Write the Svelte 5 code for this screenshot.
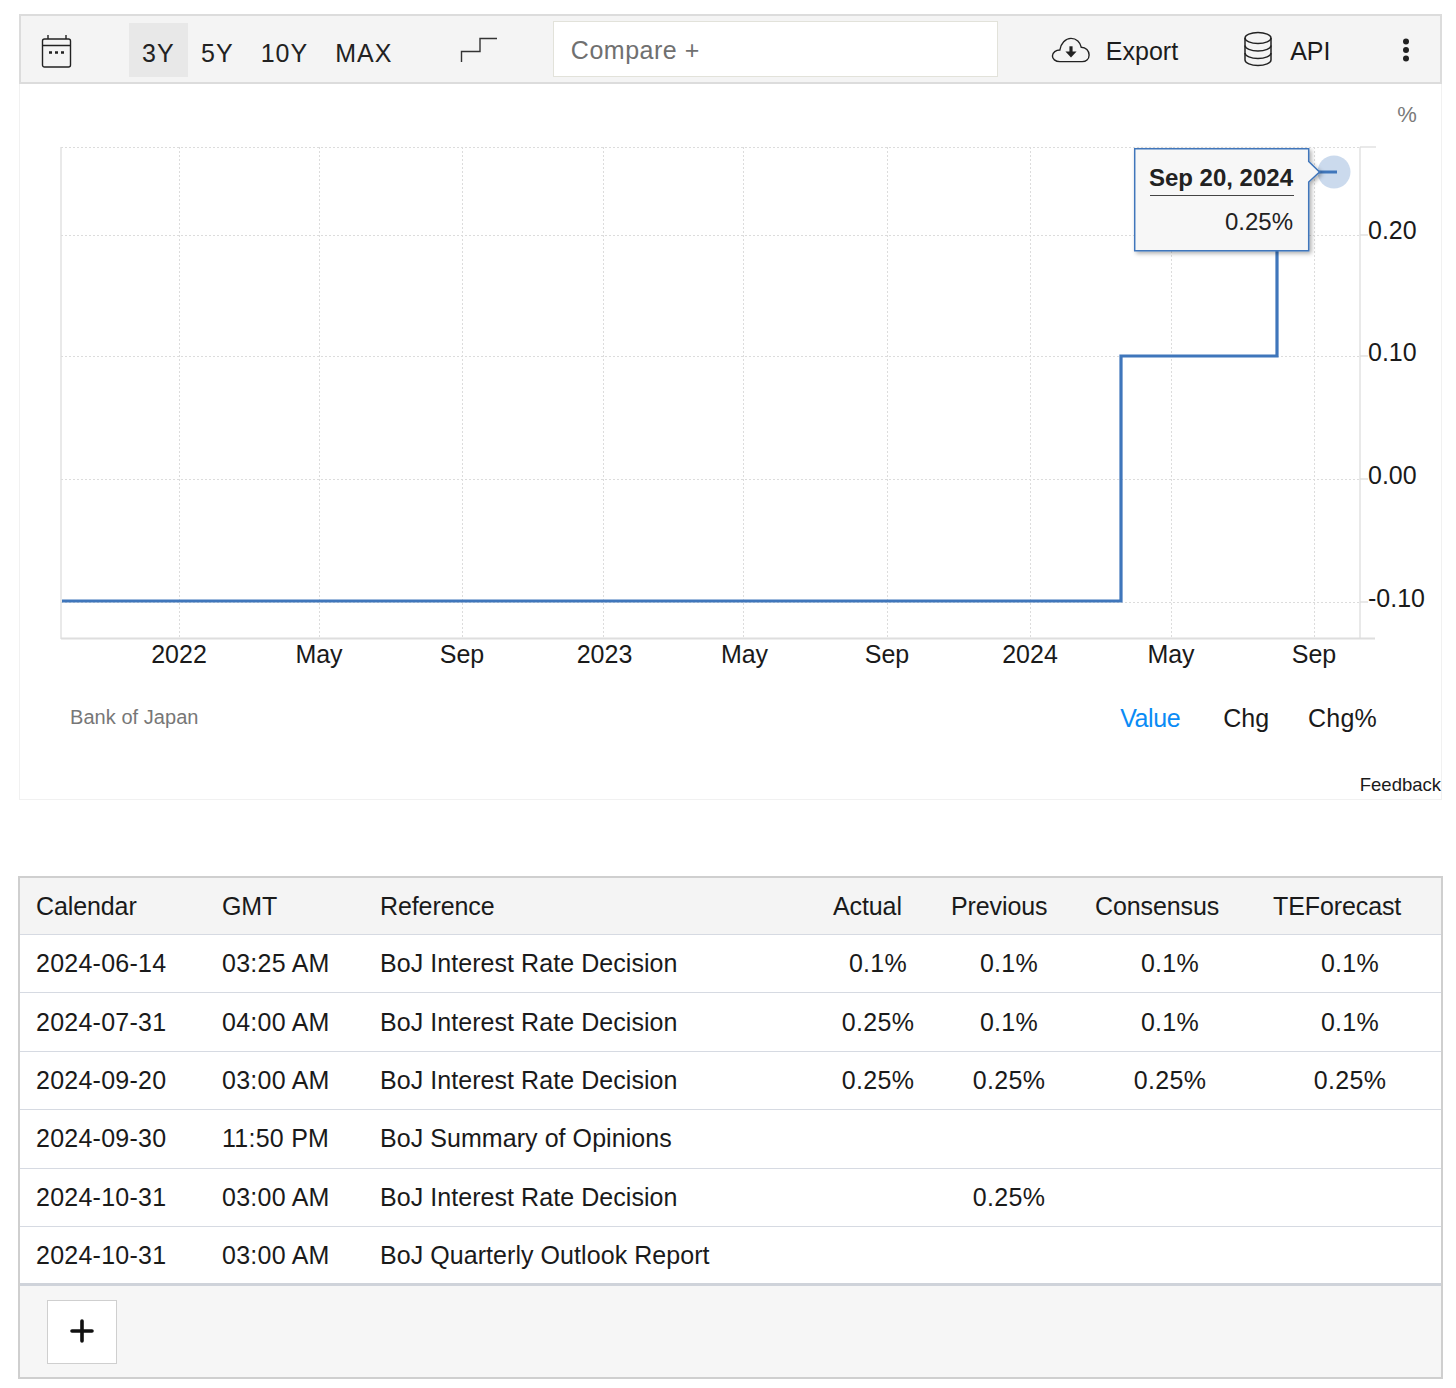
<script>
  const vx = [179, 319, 462, 603, 743, 887, 1030, 1171, 1314];
  const hy = [147, 235, 356, 479, 602];
  const xl = [[179,'2022'],[319,'May'],[462,'Sep'],[604.5,'2023'],[744.5,'May'],[887,'Sep'],[1030,'2024'],[1171,'May'],[1314,'Sep']];
  const yl = [[239,'0.20'],[361,'0.10'],[484,'0.00'],[607,'-0.10']];
  const rows = [
    ['2024-06-14','03:25 AM','BoJ Interest Rate Decision','0.1%','0.1%','0.1%','0.1%'],
    ['2024-07-31','04:00 AM','BoJ Interest Rate Decision','0.25%','0.1%','0.1%','0.1%'],
    ['2024-09-20','03:00 AM','BoJ Interest Rate Decision','0.25%','0.25%','0.25%','0.25%'],
    ['2024-09-30','11:50 PM','BoJ Summary of Opinions','','','',''],
    ['2024-10-31','03:00 AM','BoJ Interest Rate Decision','','0.25%','',''],
    ['2024-10-31','03:00 AM','BoJ Quarterly Outlook Report','','','','']
  ];
  const heads = ['Calendar','GMT','Reference','Actual','Previous','Consensus','TEForecast'];
</script>

<div class="page">
  <section class="card">
    <div class="toolbar">
      <svg class="cal" width="32" height="36" viewBox="0 0 32 36" fill="none" stroke="#222" stroke-width="1.4">
        <rect x="1.5" y="6" width="28" height="28" rx="2"/>
        <path d="M1.5 12.5H29.5M7 2V6M25 2V6"/>
        <path d="M8 19.5h3M14 19.5h3M20 19.5h3" stroke-width="2.4"/>
      </svg>
      <div class="ranges">
        <button class="active">3Y</button><button>5Y</button><button>10Y</button><button>MAX</button>
      </div>
      <svg class="step" width="38" height="26" viewBox="0 0 38 26" fill="none" stroke="#333" stroke-width="1.4">
        <path d="M1.5 25V14.5H20V1.5H37"/>
      </svg>
      <div class="compare">Compare +</div>
      <svg class="cloud" width="40" height="26" viewBox="0 0 42 28" fill="none" stroke="#222" stroke-width="1.5">
        <path d="M9 26.5C4 26.5 1 23.5 1 20.5C1 16.5 5 14 9 14C10 7 15 1.5 21 1.5C27 1.5 31 6 32 11C37 11 40.5 15 40.5 19.5C40.5 24 37 26.5 33 26.5Z"/>
        <path d="M21 10V17" stroke-width="3.4"/>
        <path d="M15 15.5H27L21 22Z" fill="#222" stroke="none"/>
      </svg>
      <span class="tool export">Export</span>
      <svg class="db" width="30" height="36" viewBox="0 0 30 36" fill="none" stroke="#222" stroke-width="1.5">
        <ellipse cx="15" cy="7" rx="13" ry="5.5"/>
        <path d="M2 7V29C2 32 8 34.5 15 34.5C22 34.5 28 32 28 29V7"/>
        <path d="M2 14.5C2 17.5 8 20 15 20C22 20 28 17.5 28 14.5M2 22C2 25 8 27.5 15 27.5C22 27.5 28 25 28 22"/>
      </svg>
      <span class="tool api">API</span>
      <svg class="dots" width="8" height="24" viewBox="0 0 8 24" fill="#222">
        <circle cx="4" cy="3.5" r="3"/><circle cx="4" cy="12" r="3"/><circle cx="4" cy="20.5" r="3"/>
      </svg>
    </div>

    <svg class="chart" width="1422" height="596" viewBox="19 84 1422 596">
      <defs>
        <filter id="sh" x="-10%" y="-10%" width="125%" height="125%">
          <feDropShadow dx="2" dy="2" stdDeviation="2" flood-color="#000" flood-opacity="0.32"/>
        </filter>
      </defs>
      <text x="1407" y="122" class="pct" text-anchor="middle">%</text>
      {#each vx as x}
        <line x1={x + 0.5} x2={x + 0.5} y1="147" y2="639" class="grid"/>
      {/each}
      {#each hy as y}
        <line x1="61" x2="1360" y1={y + 0.5} y2={y + 0.5} class="grid"/>
      {/each}
      <line x1="61" x2="61" y1="147" y2="639" class="axis"/>
      <line x1="1360" x2="1360" y1="147" y2="639" class="axis"/>
      <line x1="61" x2="1375" y1="638.5" y2="638.5" class="axis bottom"/>
      <line x1="1360" x2="1376" y1="147" y2="147" class="axis"/>
      {#each [235,356,479,602] as y}
        <line x1="1360" x2="1368" y1={y} y2={y} class="axis"/>
      {/each}
      <circle cx="1334" cy="172" r="16.5" fill="#cbdaed"/>
      <path d="M62 601H1121V356H1277V172H1337" fill="none" stroke="#3f76bb" stroke-width="3.2"/>
      <path d="M1134.7 148.7H1308.7V161.5L1319.5 172L1308.7 182V250.7H1134.7Z" fill="#f7f7f7" stroke="#3f76bb" stroke-width="1.5" filter="url(#sh)"/>
      <text x="1293" y="186" text-anchor="end" class="tipdate">Sep 20, 2024</text>
      <line x1="1150" x2="1294" y1="195.5" y2="195.5" stroke="#444" stroke-width="1"/>
      <text x="1293" y="230" text-anchor="end" class="tipval">0.25%</text>
      {#each xl as [x, t]}
        <text x={x} y="663" text-anchor="middle" class="lab">{t}</text>
      {/each}
      {#each yl as [y, t]}
        <text x="1368" y={y} class="lab">{t}</text>
      {/each}
    </svg>

    <div class="foot">
      <span class="source">Bank of Japan</span>
      <div class="tabs"><span class="on">Value</span><span class="chg">Chg</span><span class="chgp">Chg%</span></div>
    </div>
    <div class="feedback">Feedback</div>
  </section>

  <section class="tablebox">
    <table>
      <colgroup>
        <col style="width:186px"/><col style="width:158px"/><col style="width:452px"/><col style="width:118px"/><col style="width:144px"/><col style="width:178px"/><col/>
      </colgroup>
      <thead>
        <tr>{#each heads as h, i}<th class:numh={i > 2}>{h}</th>{/each}</tr>
      </thead>
      <tbody>
        {#each rows as r}
          <tr>
            {#each r as c, i}
              <td class:num={i > 2} class:mono={i < 2}>{c}</td>
            {/each}
          </tr>
        {/each}
      </tbody>
    </table>
    <div class="more"><button aria-label="more"><svg width="24" height="24" viewBox="0 0 24 24" stroke="#111" stroke-width="3.6" stroke-linecap="round"><path d="M12 2V22M2 12H22"/></svg></button></div>
  </section>
</div>

<style>
  :global(body) { margin: 0; background: #fff; }
  .page {
    box-sizing: border-box;
    width: 1456px;
    height: 1388px;
    padding: 14px 13px 0 18px;
    font-family: "Liberation Sans", Arial, sans-serif;
    color: #1a1a1a;
  }
  .card {
    box-sizing: border-box;
    margin-left: 1px;
    margin-right: 1px;
    height: 786px;
    border: 1px solid #f1f1f1;
    border-top: 0;
    position: relative;
  }
  .toolbar {
    box-sizing: border-box;
    height: 70px;
    margin-left: -1px;
    margin-right: -1px;
    background: #f4f4f4;
    border: 2px solid #dcdcdc;
    display: flex;
    align-items: center;
  }
  .cal { margin-left: 20px; flex: none; margin-top: 3px; }
  .ranges { display: flex; margin-left: 56px; height: 54px; margin-top: 2px; }
  .ranges button {
    border: 0; background: none; padding: 6px 13.5px 0; margin: 0;
    font: 25px "Liberation Sans", Arial, sans-serif;
    color: #222;
    letter-spacing: 1px;
  }
  .step { margin-left: 54px; flex: none; margin-top: 2px; }
  .ranges button.active { background: #e8e8e8; padding: 6px 13px 0; }
  .compare {
    box-sizing: border-box;
    margin-left: 55px;
    width: 445px;
    height: 56px;
    background: #fff;
    border: 1.5px solid #e2e2da;
    padding: 2px 0 0 17px;
    display: flex;
    align-items: center;
    font-size: 25px;
    letter-spacing: 0.5px;
    color: #707070;
  }
  .cloud { margin-left: 53px; flex: none; margin-top: 1px; }
  .tool { font-size: 25px; color: #1c1c1c; margin-top: 4px; }
  .export { margin-left: 15px; }
  .db { margin-left: 65px; flex: none; }
  .api { margin-left: 17px; }
  .dots { margin-left: 72px; flex: none; margin-top: 2px; }
  .chart { display: block; margin-left: -1px; }
  .grid { stroke: #dcdcdc; stroke-width: 1; stroke-dasharray: 2 2; }
  .axis { stroke: #dedede; stroke-width: 1.3; }
  .axis.bottom { stroke-width: 1.8; }
  .lab { font-size: 25px; fill: #1a1a1a; }
  .pct { font-size: 22px; fill: #7a7a7a; }
  .tipdate { font-size: 24px; font-weight: 700; fill: #222; }
  .tipval { font-size: 24px; fill: #222; }
  .foot {
    display: flex;
    justify-content: space-between;
    align-items: center;
    height: 76px;
    padding: 0 64px 0 50px;
  }
  .source { font-size: 20px; color: #777; margin-top: -1px; letter-spacing: 0.05px; }
  .tabs { display: flex; font-size: 25px; margin-top: 1px; }
  .tabs span { color: #1a1a1a; }
  .tabs .on { color: #0a8bf5; letter-spacing: -0.4px; }
  .tabs .chg { margin-left: 43px; }
  .tabs .chgp { margin-left: 39px; letter-spacing: 0.2px; }
  .feedback { text-align: right; font-size: 18.5px; color: #1a1a1a; margin-top: 18px; }
  .tablebox {
    box-sizing: border-box;
    margin-top: 76px;
    height: 503px;
    border: 2px solid #cfcfcf;
    background: #fff;
    display: flex;
    flex-direction: column;
  }
  table {
    width: 100%;
    border-collapse: collapse;
    table-layout: fixed;
    font-size: 25px;
    color: #1a1a1a;
  }
  tbody tr { height: 58.4px; }
  thead tr { height: 56.5px; }
  th {
    font-weight: 400;
    text-align: left;
    background: #f4f4f4;
    padding: 0 0 0 16px;
    border-bottom: 1.5px solid #d6dae2;
    letter-spacing: -0.1px;
  }
  th.numh { padding-left: 17px; }
  td {
    padding: 0 0 0 16px;
    border-bottom: 1.5px solid #d6dae2;
    white-space: nowrap;
    letter-spacing: 0.06px;
  }
  td.mono { letter-spacing: 0.25px; }
  td.num { text-align: center; padding-left: 6px; letter-spacing: 0.3px; }
  td.num:last-child { padding-left: 3px; }
  tbody tr:last-child td { border-bottom: 3px solid #cfd3da; }
  .more {
    flex: 1;
    background: #f6f6f6;
    padding: 14px 0 0 27px;
  }
  .more button {
    box-sizing: border-box;
    width: 70px;
    height: 64px;
    background: #fff;
    border: 1.5px solid #cfcfcf;
    padding: 0 0 2px;
    display: flex;
    align-items: center;
    justify-content: center;
  }
</style>
